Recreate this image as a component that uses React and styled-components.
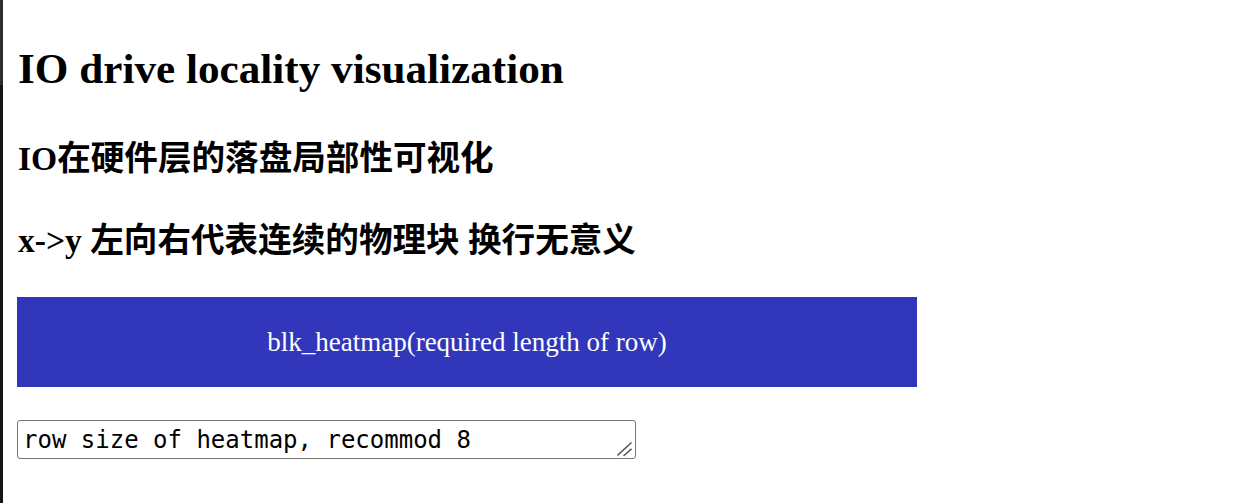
import React from "react";
import styled, { createGlobalStyle } from "styled-components";

const Global = createGlobalStyle`
  html, body {
    margin: 0;
    padding: 0;
    background: #fff;
  }
  body {
    font-family: "Liberation Serif", "Noto Sans CJK SC", serif;
    color: #000;
  }
`;

const Page = styled.div`
  min-height: 100vh;
  box-sizing: border-box;
  border-left: 3px solid #1a1a1a;
  border-image: linear-gradient(to bottom, #2e2e2e 0, #2e2e2e 86px, #141414 86px, #141414 100%) 1;
  padding: 1px 14px 0 14px;
`;

const Title = styled.h1`
  font-size: 43.2px;
  font-weight: bold;
  margin: 43px 0 0 1px;
`;

const SubTitle = styled.h2`
  font-size: 33.6px;
  font-weight: bold;
  margin: ${(p) => p.$gap}px 0 0 1px;
  font-family: "Liberation Serif", "Noto Sans CJK SC", sans-serif;
`;

const HeatmapButton = styled.div`
  width: 900px;
  height: 90px;
  margin-top: 35px;
  background: #3136bb;
  color: #fff;
  display: flex;
  align-items: center;
  justify-content: center;
  font-size: 27px;
  font-family: "Liberation Serif", serif;
`;

const InputWrap = styled.div`
  position: relative;
  width: 619px;
  margin-top: 33px;
`;

const RowInput = styled.textarea`
  display: block;
  width: 619px;
  height: 39px;
  box-sizing: border-box;
  font-family: "DejaVu Sans Mono", monospace;
  font-size: 24px;
  color: #000;
  padding: 5px 5px 0 5px;
  border: 1px solid #767676;
  border-radius: 3px;
  line-height: 28px;
  overflow: hidden;
  resize: none;
`;

const Grip = styled.svg`
  position: absolute;
  right: 3px;
  bottom: 2px;
  width: 16px;
  height: 16px;
  pointer-events: none;
`;

export default function App() {
  return (
    <>
      <Global />
      <Page>
        <Title>IO drive locality visualization</Title>
        <SubTitle $gap={38}>IO在硬件层的落盘局部性可视化</SubTitle>
        <SubTitle $gap={33}>x-&gt;y 左向右代表连续的物理块 换行无意义</SubTitle>
        <HeatmapButton>blk_heatmap(required length of row)</HeatmapButton>
        <InputWrap>
          <RowInput defaultValue="row size of heatmap, recommod 8" />
          <Grip viewBox="0 0 16 16">
            <path d="M0.5 14.5 L14.5 1.5 M6.5 15 L14.5 7.8" stroke="#5a5a5a" strokeWidth="1.6" fill="none" />
          </Grip>
        </InputWrap>
      </Page>
    </>
  );
}
